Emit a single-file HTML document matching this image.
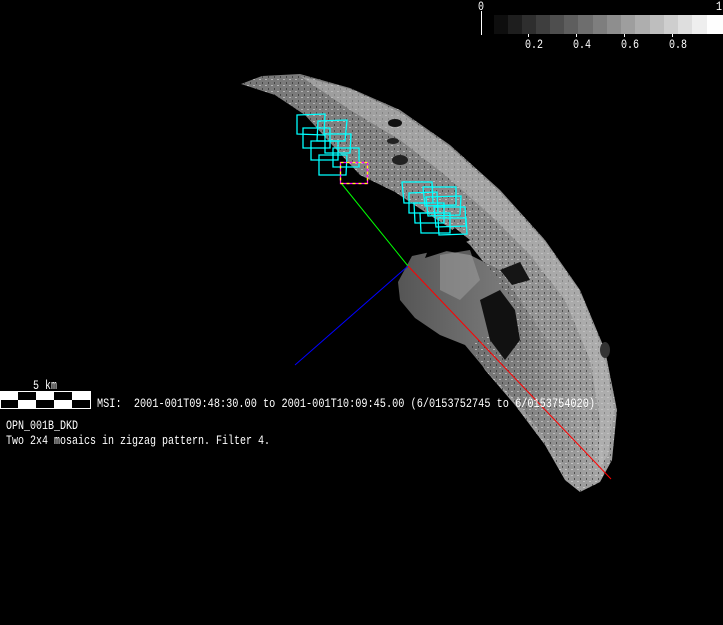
<!DOCTYPE html>
<html><head><meta charset="utf-8"><style>
html,body{margin:0;padding:0;background:#000;width:723px;height:625px;overflow:hidden}
svg{position:absolute;left:0;top:0}
text{font-family:"Liberation Mono","DejaVu Sans Mono",monospace;font-size:12.5px;fill:#fff}
</style></head><body>
<svg width="723" height="625" viewBox="0 0 723 625">
<defs>
<linearGradient id="g1" x1="0" y1="0" x2="1" y2="1">
<stop offset="0" stop-color="#777"/><stop offset="0.5" stop-color="#8c8c8c"/><stop offset="1" stop-color="#a0a0a0"/>
</linearGradient>
<linearGradient id="g2" x1="0" y1="0" x2="1" y2="0">
<stop offset="0" stop-color="#555"/><stop offset="0.6" stop-color="#808080"/><stop offset="1" stop-color="#a8a8a8"/>
</linearGradient>
<pattern id="dots" width="6" height="6" patternUnits="userSpaceOnUse">
<rect x="1" y="1" width="2" height="1" fill="#ddd" opacity="0.6"/><rect x="4" y="4" width="1" height="2" fill="#222" opacity="0.6"/>
</pattern>
</defs>
<path d="M241,84 L262,76 L300,74 L350,88 L400,110 L450,145 L500,190 L545,240 L580,290 L605,350 L617,410 L612,460 L600,482 L580,492 L565,480 L545,445 L515,405 L485,370 L470,345 L495,330 L510,300 L490,270 L470,245 L450,228 L425,212 L395,192 L360,175 L335,148 L305,115 L275,95 Z" fill="url(#g1)"/>
<path d="M398,282 L412,256 L440,250 L470,255 L500,270 L520,300 L540,330 L560,360 L585,400 L600,440 L605,470 L595,485 L575,480 L550,445 L520,405 L490,375 L465,345 L440,335 L415,318 L400,300 Z" fill="url(#g2)"/>
<path d="M241,84 L262,76 L300,74 L350,88 L400,110 L450,145 L500,190 L545,240 L580,290 L605,350 L617,410 L612,460 L600,482 L580,492 L565,480 L545,445 L515,405 L485,370 L470,345 L495,330 L510,300 L490,270 L470,245 L450,228 L425,212 L395,192 L360,175 L335,148 L305,115 L275,95 Z" fill="url(#dots)"/>
<path d="M300,76 L350,89 L400,112 L450,147 L500,192 L545,242 L580,292 L604,352 L614,410 L608,455 L598,470 L600,420 L590,360 L565,300 L530,255 L490,215 L445,175 L400,140 L350,110 Z" fill="#c0c0c0" opacity="0.5"/>
<ellipse cx="395" cy="123" rx="7" ry="4" fill="#111"/>
<ellipse cx="400" cy="160" rx="8" ry="5" fill="#222"/>
<ellipse cx="393" cy="141" rx="6" ry="3" fill="#222"/>
<path d="M480,300 L500,290 L515,310 L520,340 L505,360 L490,340 Z" fill="#111"/>
<path d="M500,270 L520,262 L530,280 L512,285 Z" fill="#151515"/>
<ellipse cx="605" cy="350" rx="5" ry="8" fill="#333"/>
<path d="M440,255 L470,250 L480,280 L460,300 L440,290 Z" fill="#9a9a9a" opacity="0.6"/>
<path d="M470,240 L455,228 L430,245 L425,258 L450,250 Z" fill="#000"/>
<line x1="341" y1="183" x2="408" y2="266" stroke="#0f0" stroke-width="1"/>
<line x1="408" y1="266" x2="295" y2="365" stroke="#00f" stroke-width="1"/>
<line x1="408" y1="266" x2="611" y2="479" stroke="#f00" stroke-width="1"/>
<g fill="none" stroke="#0ff" stroke-width="1.3">
<path d="M297,115 L325,114 L324,135 L297,134 Z"/>
<path d="M318,121 L347,120 L345,141 L317,141 Z"/>
<path d="M303,128 L330,128 L330,148 L303,148 Z"/>
<path d="M325,134 L351,134 L350,153 L325,153 Z"/>
<path d="M311,141 L338,141 L338,160 L311,160 Z"/>
<path d="M333,148 L359,148 L359,167 L333,167 Z"/>
<path d="M319,155 L347,155 L346,175 L319,175 Z"/>
<path d="M402,182 L432,182 L433,203 L404,203 Z"/>
<path d="M423,187 L456,187 L456,205 L425,206 Z"/>
<path d="M409,193 L437,192 L438,213 L409,213 Z"/>
<path d="M426,197 L461,196 L460,215 L428,216 Z"/>
<path d="M414,203 L444,203 L444,223 L415,223 Z"/>
<path d="M434,207 L465,207 L466,226 L436,227 Z"/>
<path d="M420,213 L450,213 L450,233 L421,233 Z"/>
<path d="M438,218 L466,218 L467,234 L439,235 Z"/>
</g>
<rect x="340.5" y="162.5" width="27" height="21" fill="none" stroke="#f0f" stroke-width="1.3"/>
<rect x="340.5" y="162.5" width="27" height="21" fill="none" stroke="#ff0" stroke-width="1.3" stroke-dasharray="3,3"/>
<g>
<rect x="494" y="15" width="15" height="19" fill="#0e0e0e"/>
<rect x="508" y="15" width="15" height="19" fill="#1e1e1e"/>
<rect x="522" y="15" width="15" height="19" fill="#2e2e2e"/>
<rect x="536" y="15" width="15" height="19" fill="#3e3e3e"/>
<rect x="550" y="15" width="15" height="19" fill="#4e4e4e"/>
<rect x="564" y="15" width="15" height="19" fill="#5e5e5e"/>
<rect x="578" y="15" width="15" height="19" fill="#6e6e6e"/>
<rect x="593" y="15" width="15" height="19" fill="#7e7e7e"/>
<rect x="607" y="15" width="15" height="19" fill="#8e8e8e"/>
<rect x="621" y="15" width="15" height="19" fill="#9e9e9e"/>
<rect x="635" y="15" width="15" height="19" fill="#aeaeae"/>
<rect x="650" y="15" width="15" height="19" fill="#bebebe"/>
<rect x="664" y="15" width="15" height="19" fill="#cecece"/>
<rect x="678" y="15" width="15" height="19" fill="#dedede"/>
<rect x="692" y="15" width="15" height="19" fill="#eeeeee"/>
<rect x="707" y="15" width="16" height="19" fill="#fefefe"/>
</g>
<line x1="481.5" y1="11" x2="481.5" y2="35" stroke="#fff"/>
<g stroke="#fff"><line x1="528.5" y1="34" x2="528.5" y2="37"/><line x1="576.5" y1="34" x2="576.5" y2="37"/><line x1="624.5" y1="34" x2="624.5" y2="37"/><line x1="672.5" y1="34" x2="672.5" y2="37"/></g>
<text x="478" y="10" textLength="6" lengthAdjust="spacingAndGlyphs">0</text>
<text x="716" y="10" textLength="6" lengthAdjust="spacingAndGlyphs">1</text>
<text x="525" y="48" textLength="18" lengthAdjust="spacingAndGlyphs">0.2</text>
<text x="573" y="48" textLength="18" lengthAdjust="spacingAndGlyphs">0.4</text>
<text x="621" y="48" textLength="18" lengthAdjust="spacingAndGlyphs">0.6</text>
<text x="669" y="48" textLength="18" lengthAdjust="spacingAndGlyphs">0.8</text>
<text x="33" y="389" textLength="24" lengthAdjust="spacingAndGlyphs">5 km</text>
<rect x="0.5" y="391.5" width="90" height="17" fill="#fff" stroke="#fff"/>
<rect x="18" y="392" width="18" height="8" fill="#000"/>
<rect x="54" y="392" width="18" height="8" fill="#000"/>
<rect x="1" y="400" width="17" height="8" fill="#000"/>
<rect x="36" y="400" width="18" height="8" fill="#000"/>
<rect x="72" y="400" width="18" height="8" fill="#000"/>
<text x="97" y="407" xml:space="preserve" textLength="498" lengthAdjust="spacingAndGlyphs">MSI:  2001-001T09:48:30.00 to 2001-001T10:09:45.00 (6/0153752745 to 6/0153754020)</text>
<text x="6" y="429" textLength="72" lengthAdjust="spacingAndGlyphs">OPN_001B_DKD</text>
<text x="6" y="444" textLength="264" lengthAdjust="spacingAndGlyphs">Two 2x4 mosaics in zigzag pattern. Filter 4.</text>
</svg>
</body></html>
